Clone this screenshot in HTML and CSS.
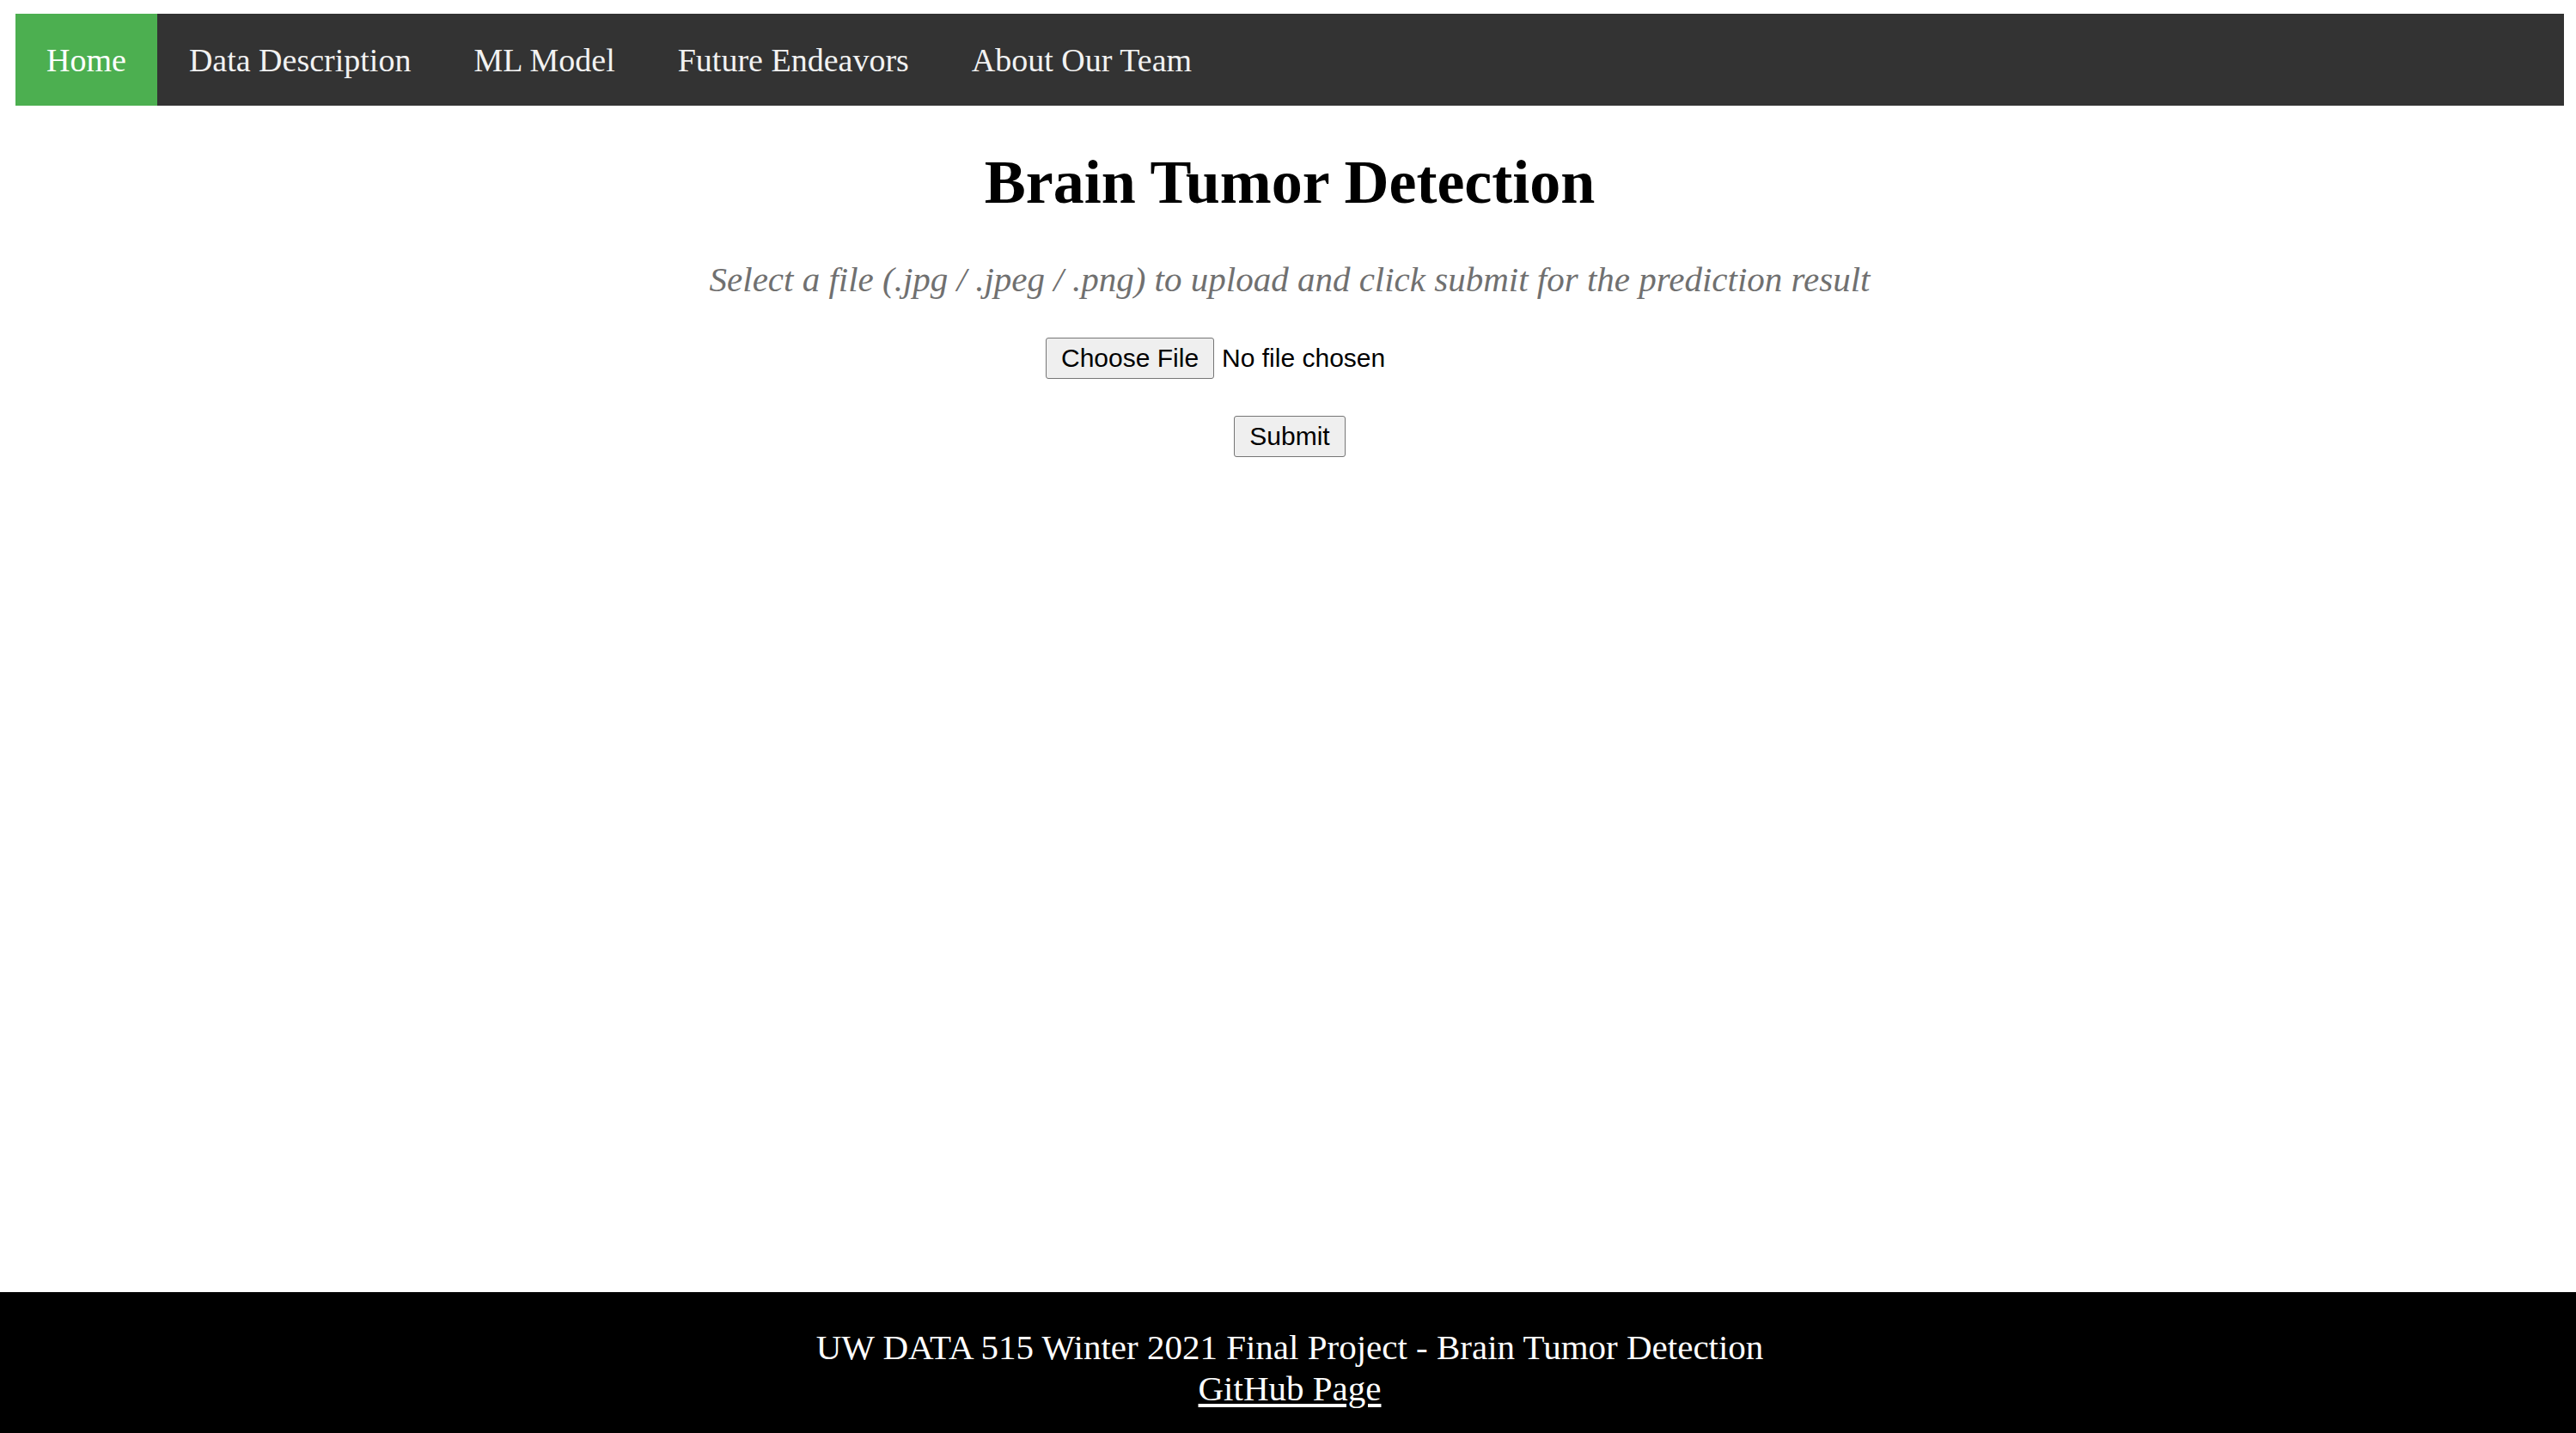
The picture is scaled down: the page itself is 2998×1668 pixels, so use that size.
FILE: index.html
```html
<!DOCTYPE html>
<html lang="en">
<head>
<meta charset="utf-8">
<title>Brain Tumor Detection</title>
<link rel="stylesheet" href="styles.css">
</head>
<body>
<nav class="topnav">
  <a class="active" href="#home">Home</a>
  <a href="#data">Data Description</a>
  <a href="#model">ML Model</a>
  <a href="#future">Future Endeavors</a>
  <a href="#team">About Our Team</a>
</nav>
<main class="content">
  <h1>Brain Tumor Detection</h1>
  <form class="upload">
    <label class="hint" for="file">Select a file (.jpg / .jpeg / .png) to upload and click submit for the prediction result</label>
    <input class="file" id="file" type="file" accept=".jpg,.jpeg,.png">
    <button class="submit" type="submit">Submit</button>
  </form>
</main>
<footer class="footer">
  <p>UW DATA 515 Winter 2021 Final Project - Brain Tumor Detection</p>
  <a href="#github">GitHub Page</a>
</footer>
</body>
</html>
```
FILE: styles.css
```css
* {
  box-sizing: border-box;
}

body {
  margin: 0;
  min-height: 100vh;
  display: flex;
  flex-direction: column;
  background: #fff;
  color: #000;
  font-family: "Liberation Serif", "Times New Roman", serif;
  font-size: 41px;
}

.topnav {
  display: flex;
  gap: 1px;
  margin: 16px 14px 0 18px;
  background: #333;
}

.topnav a {
  padding: 33px 36px 31px;
  color: #f2f2f2;
  font-size: 38px;
  line-height: 43px;
  text-decoration: none;
}

.topnav .active {
  background: #4caf50;
  color: #fff;
}

.content {
  flex: 1;
  padding: 0 14px 0 18px;
  text-align: center;
}

h1 {
  margin: 48px 0;
  font-size: 72px;
  line-height: 82px;
}

.upload {
  display: flex;
  flex-direction: column;
  align-items: center;
}

.hint {
  color: #707070;
  font-style: italic;
  line-height: 48px;
}

.file {
  width: 568px;
  margin: 44px 0 43px;
  font: 30px "Liberation Sans", Arial, sans-serif;
}

.file::file-selector-button,
.submit {
  height: 48px;
  padding: 0 17px;
  border: 1px solid #767676;
  border-radius: 3px;
  background: #efefef;
  color: #000;
  font: 30px "Liberation Sans", Arial, sans-serif;
}

.file::file-selector-button {
  margin-right: 9px;
}

.footer {
  padding: 40px 14px 28px 18px;
  background: #000;
  color: #fff;
  line-height: 48px;
  text-align: center;
}

.footer p {
  margin: 0;
}

.footer a {
  color: #fff;
  text-decoration-thickness: 4px;
  text-underline-offset: 4px;
}
```
